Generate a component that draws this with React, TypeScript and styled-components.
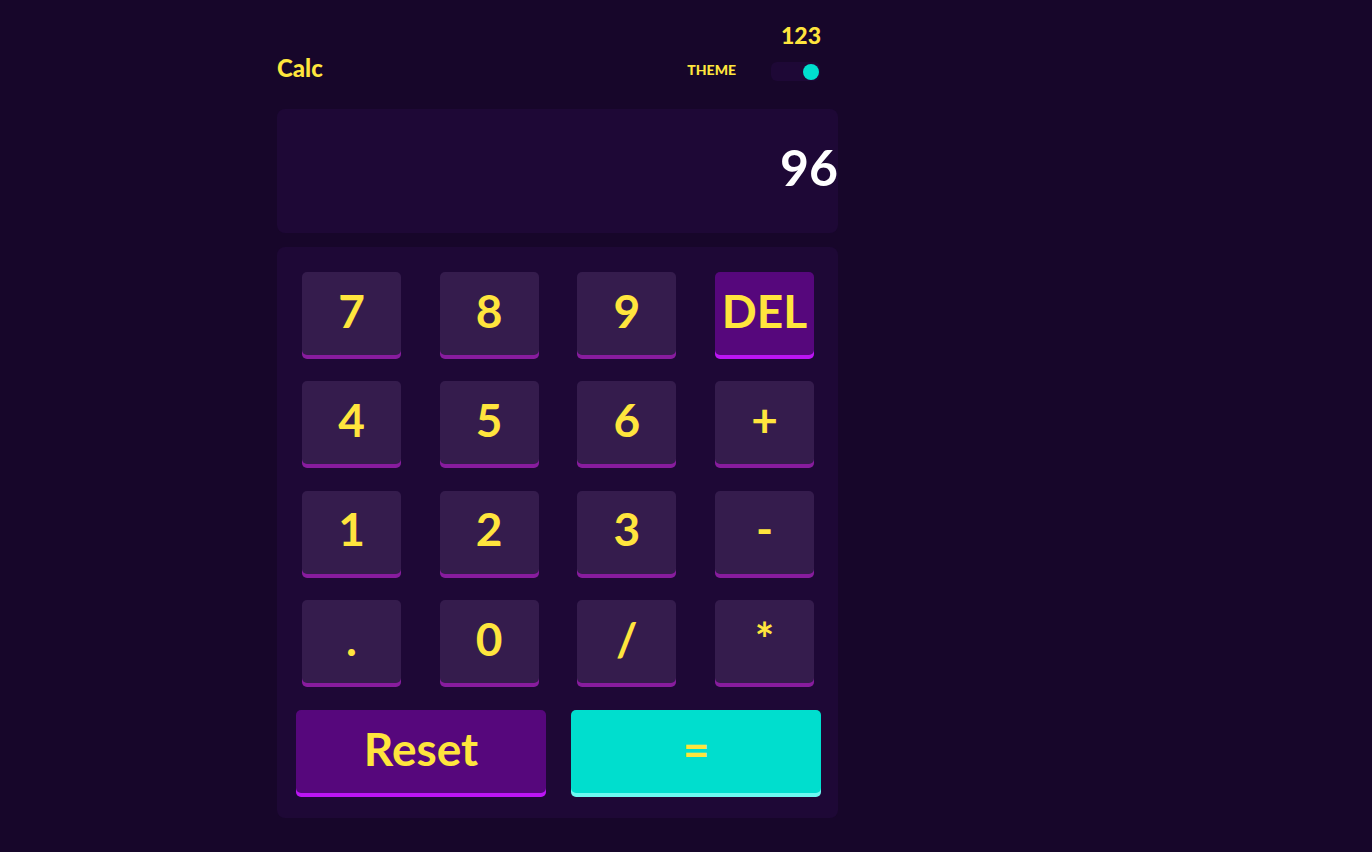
import React from 'react';
import styled, { createGlobalStyle } from 'styled-components';

const GlobalStyle = createGlobalStyle`
    body {
        margin: 0;
        background: #17062a;
        font-family: 'Lato', 'Liberation Sans', sans-serif;
    }
`;

const Page = styled.div`
    min-height: 852px;
    padding: 22px 0 0 277px;
    box-sizing: border-box;
`;

const Calculator = styled.div`
    width: 561px;
    display: flex;
    flex-direction: column;
`;

const Header = styled.header`
    display: flex;
    justify-content: space-between;
    align-items: flex-end;
    padding-right: 18px;
    margin-bottom: 28px;
`;

const Title = styled.h1`
    margin: 0 0 1px;
    color: #ffe53d;
    font-size: 24px;
    font-weight: 900;
    line-height: 24px;
`;

const ThemeBox = styled.div`
    display: flex;
    flex-direction: column;
    align-items: flex-end;
`;

const Steps = styled.div`
    color: #ffe53d;
    font-size: 23px;
    font-weight: 900;
    line-height: 26px;
    margin-bottom: 14px;
    margin-right: -1px;
`;

const ThemeRow = styled.div`
    display: flex;
    align-items: center;
    gap: 35px;
`;

const ThemeLabel = styled.span`
    color: #ffe53d;
    font-size: 14px;
    font-weight: 900;
    line-height: 16px;
    margin-top: -3px;
`;

const Toggle = styled.div`
    width: 49px;
    height: 19px;
    border-radius: 6px;
    background: #1e0836;
    display: flex;
    align-items: center;
    justify-content: flex-end;
    padding: 0 1px;
    box-sizing: border-box;
`;

const Knob = styled.span`
    width: 16px;
    height: 16px;
    border-radius: 50%;
    background: #00dece;
`;

const Screen = styled.div`
    height: 124px;
    border-radius: 8px;
    background: #1e0836;
    display: flex;
    align-items: center;
    justify-content: flex-end;
    padding-bottom: 8px;
    box-sizing: border-box;
    color: #ffffff;
    font-size: 50px;
    font-weight: 700;
    margin-bottom: 14px;
`;

const Keypad = styled.div`
    border-radius: 8px;
    background: #1e0836;
    padding: 25px 17px 25px 19px;
    display: flex;
    flex-direction: column;
    gap: 27px;
`;

const KeyGrid = styled.div`
    display: grid;
    grid-template-columns: repeat(4, 99px);
    grid-auto-rows: 83px;
    justify-content: space-between;
    row-gap: 26.4px;
    margin: 0 7px 0 6px;
`;

type Tone = 'plain' | 'purple' | 'cyan';

const faces: Record<Tone, [string, string]> = {
    plain: ['#351c4d', '#881c9e'],
    purple: ['#56077c', '#bc15f4'],
    cyan: ['#00dece', '#6cf9f1'],
};

const Key = styled.button<{ $tone?: Tone }>`
    height: 83px;
    border: none;
    border-radius: 5px;
    padding: 0 0 6px;
    background: ${(p) => faces[p.$tone || 'plain'][0]};
    box-shadow: 0 4px 0 ${(p) => faces[p.$tone || 'plain'][1]};
    color: #ffe53d;
    font-family: 'Lato', 'Liberation Sans', sans-serif;
    font-size: 46px;
    font-weight: 700;
    line-height: 1;
    display: flex;
    align-items: center;
    justify-content: center;
    cursor: pointer;
`;

const BottomRow = styled.div`
    display: grid;
    grid-template-columns: 250px 250px;
    justify-content: space-between;
`;

const keys = ['7', '8', '9', 'DEL', '4', '5', '6', '+', '1', '2', '3', '-', '.', '0', '/', '*'];

export default function App() {
    return (
        <Page>
            <GlobalStyle />
            <Calculator>
                <Header>
                    <Title>Calc</Title>
                    <ThemeBox>
                        <Steps>123</Steps>
                        <ThemeRow>
                            <ThemeLabel>THEME</ThemeLabel>
                            <Toggle>
                                <Knob />
                            </Toggle>
                        </ThemeRow>
                    </ThemeBox>
                </Header>
                <Screen>96</Screen>
                <Keypad>
                    <KeyGrid>
                        {keys.map((k) => (
                            <Key key={k} $tone={k === 'DEL' ? 'purple' : 'plain'}>
                                {k}
                            </Key>
                        ))}
                    </KeyGrid>
                    <BottomRow>
                        <Key $tone="purple">Reset</Key>
                        <Key $tone="cyan">=</Key>
                    </BottomRow>
                </Keypad>
            </Calculator>
        </Page>
    );
}
